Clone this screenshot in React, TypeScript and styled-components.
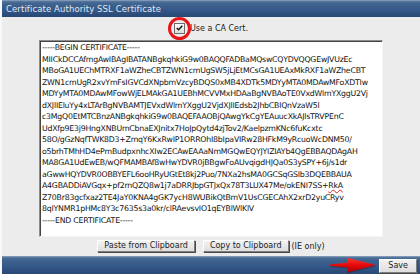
import React from 'react'
import styled, { createGlobalStyle } from 'styled-components'

const GlobalStyle = createGlobalStyle`
  html, body {
    margin: 0;
    padding: 0;
    background: #ececec;
  }
  body {
    font-family: 'DejaVu Sans', Verdana, sans-serif;
    font-size: 8px;
    color: #1a1a1a;
  }
`

const CERT_LINES = [
  '-----BEGIN CERTIFICATE-----',
  'MIICkDCCAfmgAwIBAgIBATANBgkqhkiG9w0BAQQFADBaMQswCQYDVQQGEwJVUzEc',
  'MBoGA1UEChMTRXF1aWZheCBTZWN1cmUgSW5jLjEtMCsGA1UEAxMkRXF1aWZheCBT',
  'ZWN1cmUgR2xvYmFsIGVCdXNpbmVzcyBDQS0xMB4XDTk5MDYyMTA0MDAwMFoXDTIw',
  'MDYyMTA0MDAwMFowWjELMAkGA1UEBhMCVVMxHDAaBgNVBAoTE0VxdWlmYXggU2Vj',
  'dXJlIEluYy4xLTArBgNVBAMTJEVxdWlmYXggU2VjdXJlIEdsb2JhbCBlQnVzaW5l',
  'c3MgQ0EtMTCBnzANBgkqhkiG9w0BAQEFAAOBjQAwgYkCgYEAuucXkAJlsTRVPEnC',
  'UdXfp9E3j9HngXNBUmCbnaEXJnitx7HoJpQytd4zjTov2/KaelpzmKNc6fuKcxtc',
  '58O/gGzNqfTWK8D3+ZmqY6KxRwIP1ORROhI8bIpaVIRw28HFkM9yRcuoWcDNM50/',
  'o5brhTMhHD4ePmBudpxnhcXIw2ECAwEAAaNmMGQwEQYJYIZIAYb4QgEBBAQDAgAH',
  'MA8GA1UdEwEB/wQFMAMBAf8wHwYDVR0jBBgwFoAUvqigdHJQa0S3ySPY+6j/s1dr',
  'aGwwHQYDVR0OBBYEFL6ooHRyUGtEt8kj2Puo/7NXa2hsMA0GCSqGSIb3DQEBBAUA',
  'A4GBADDiAVGqx+pf2rnQZQ8w1j7aDRRJbpGTJxQx78T3LUX47Me/okENI7SS+|RkA',
  'Z70Br83gcfxaz2TE4JaY0KNA4gGK7ycH8WUBikQtBmV1UsCGECAhX2xrD2yuCRyv',
  '8qIYNMR1pHMc8Y3c7635s3a0kr/clRAevsvIO1qEYBlWlKlV',
  '-----END CERTIFICATE-----',
]

const Panel = styled.div`
  width: 420px;
  height: 274px;
  box-sizing: border-box;
  border-left: 2px solid #f8f8f8;
  display: flex;
  flex-direction: column;
  background: #ececec;
  overflow: hidden;
`

const Bar = styled.div<{ $end?: boolean }>`
  flex: none;
  height: ${(p) => (p.$end ? 18 : 17)}px;
  display: flex;
  align-items: center;
  justify-content: ${(p) => (p.$end ? 'flex-end' : 'flex-start')};
  gap: 2px;
  padding: 0 3px 0 4px;
  background: linear-gradient(#5a7ba3 0, #42668f 2px, #33588a 55%, #284875 100%);
  border-top: 1px solid #7f97b5;
  box-sizing: border-box;
`

const Title = styled.span`
  color: #e2e8ef;
  font-size: 8.5px;
  letter-spacing: 0.1px;
`

const Body = styled.div`
  flex: 1;
  display: flex;
  flex-direction: column;
  align-items: center;
  padding-top: 4px;
`

const CheckRow = styled.label`
  display: flex;
  align-items: center;
  gap: 5px;
  height: 14px;
`

const CheckBox = styled.span`
  position: relative;
  width: 9px;
  height: 9px;
  border: 1px solid #6d6d6d;
  background: linear-gradient(#fdfdfd, #dcdcdc);
  display: flex;
  align-items: center;
  justify-content: center;

  &::after {
    content: '';
    position: absolute;
    left: -7px;
    top: -7px;
    width: 17px;
    height: 17px;
    border: 3px solid #e8141a;
    border-radius: 50%;
  }
`

const CertBox = styled.div`
  margin-top: 5px;
  width: 344px;
  height: 197px;
  box-sizing: border-box;
  background: #fff;
  border: 1px solid;
  border-color: #8c8c8c #f4f4f4 #f4f4f4 #8c8c8c;
  box-shadow: inset 1px 1px 0 #444;
  padding: 1px 2px;
  white-space: pre;
  font-size: 7.8px;
  letter-spacing: -0.22px;
  line-height: 11.5px;
  color: #111;
`

const Misspelled = styled.span`
  text-decoration: underline wavy #e02020;
  text-decoration-thickness: 1px;
  text-underline-offset: 1px;
`

const ButtonRow = styled.div`
  margin-top: 3px;
  display: flex;
  align-items: center;
  gap: 3px;
`

const Button = styled.button<{ $wide?: boolean; $spaced?: boolean }>`
  font-family: 'DejaVu Sans', Verdana, sans-serif;
  font-size: 8px;
  color: #222;
  height: ${(p) => (p.$wide ? 14 : 12)}px;
  padding: 0 ${(p) => (p.$wide ? 8 : 6)}px;
  margin: 0 ${(p) => (p.$spaced ? 5 : 0)}px 0 0;
  background: linear-gradient(#f2f2f2, #dedede);
  border: 1px solid;
  border-color: #fff #7c7c7c #7c7c7c #fff;
  box-shadow: 1px 1px 0 #4a4a4a;
  line-height: 1;
`

const Note = styled.span`
  font-size: 8px;
  color: #222;
`

function Arrow() {
  return (
    <svg width="48" height="17" viewBox="0 0 48 17">
      <defs>
        <linearGradient id="arrowFill" x1="0" y1="0" x2="0" y2="1">
          <stop offset="0" stopColor="#ff3a2e" />
          <stop offset="0.5" stopColor="#e5090c" />
          <stop offset="1" stopColor="#a80000" />
        </linearGradient>
      </defs>
      <path d="M1 8 L19 6 L18 1 L47 8.5 L18 16 L19 11 L1 9.2 Z" fill="#3a1010" opacity="0.35" transform="translate(0.5 0.8)" />
      <path d="M1 7.6 L19 5.6 L18 0.8 L47 8 L18 15.4 L19 10.4 L1 8.8 Z" fill="url(#arrowFill)" />
    </svg>
  )
}

export default function App() {
  return (
    <>
      <GlobalStyle />
      <Panel>
        <Bar>
          <Title>Certificate Authority SSL Certificate</Title>
        </Bar>
        <Body>
          <CheckRow>
            <CheckBox>
              <svg width="7" height="6" viewBox="0 0 7 6">
                <path d="M0.8 3 L2.6 4.8 L6.3 0.8" fill="none" stroke="#111" strokeWidth="1.4" />
              </svg>
            </CheckBox>
            <span>Use a CA Cert.</span>
          </CheckRow>
          <CertBox>
            {CERT_LINES.map((line) => {
              const [plain, flagged] = line.split('|')
              return (
                <div key={line}>
                  {plain}
                  {flagged && <Misspelled>{flagged}</Misspelled>}
                </div>
              )
            })}
          </CertBox>
          <ButtonRow>
            <Button $spaced>Paste from Clipboard</Button>
            <Button>Copy to Clipboard</Button>
            <Note>(IE only)</Note>
          </ButtonRow>
        </Body>
        <Bar $end>
          <Arrow />
          <Button $wide>Save</Button>
        </Bar>
      </Panel>
    </>
  )
}
